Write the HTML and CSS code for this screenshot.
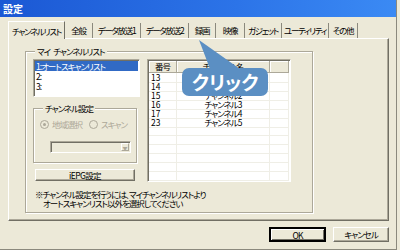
FILE: index.html
```html
<!DOCTYPE html>
<html lang="ja">
<head>
    <meta charset="UTF-8">
    <title>設定</title>
    <link rel="stylesheet" href="styles.css">
</head>
<body>
    <div class="window">
        <!-- タイトルバー -->
        <div class="titlebar">設定</div>

        <div class="dialog">
            <!-- タブ -->
            <div class="tabs">
                <div class="tab active t-list">チャンネルリスト</div>
                <div class="tab t-general">全般</div>
                <div class="tab t-data1">データ放送1</div>
                <div class="tab t-data2">データ放送2</div>
                <div class="tab t-rec">録画</div>
                <div class="tab t-video">映像</div>
                <div class="tab t-gadget">ガジェット</div>
                <div class="tab t-util">ユーティリティ</div>
                <div class="tab t-other">その他</div>
            </div>

            <!-- タブページ -->
            <div class="panel">
                <fieldset class="group mylist">
                    <legend>マイ&ensp;チャンネルリスト</legend>
                    <div class="mylist-body">
                        <div class="left-col">
                            <ul class="listbox">
                                <li class="selected">1:オートスキャンリスト</li>
                                <li>2:</li>
                                <li>3:</li>
                            </ul>

                            <fieldset class="group chset">
                                <legend>チャンネル設定</legend>
                                <div class="radios">
                                    <span class="radio checked"></span><span class="radio-label">地域選択</span>
                                    <span class="radio"></span><span class="radio-label">スキャン</span>
                                </div>
                                <div class="combo">
                                    <div class="combo-text"></div>
                                    <div class="combo-btn">▼</div>
                                </div>
                            </fieldset>

                            <div class="btn iepg">iEPG設定</div>
                        </div>

                        <!-- チャンネル一覧 -->
                        <div class="listview">
                            <div class="lv-row lv-header">
                                <div>番号</div>
                                <div>チャンネル名</div>
                                <div></div>
                            </div>
                            <div class="lv-row"><div>13</div><div>チャンネル0</div><div></div></div>
                            <div class="lv-row"><div>14</div><div>チャンネル1</div><div></div></div>
                            <div class="lv-row"><div>15</div><div>チャンネル2</div><div></div></div>
                            <div class="lv-row"><div>16</div><div>チャンネル3</div><div></div></div>
                            <div class="lv-row"><div>17</div><div>チャンネル4</div><div></div></div>
                            <div class="lv-row"><div>23</div><div>チャンネル5</div><div></div></div>
                            <div class="lv-row"><div></div><div></div><div></div></div>
                            <div class="lv-row"><div></div><div></div><div></div></div>
                            <div class="lv-row"><div></div><div></div><div></div></div>
                            <div class="lv-row"><div></div><div></div><div></div></div>
                            <div class="lv-row"><div></div><div></div><div></div></div>
                            <div class="lv-row"><div></div><div></div><div></div></div>
                        </div>

                        <p class="note">
                            <span>※チャンネル設定を行うには、マイチャンネルリストより</span>
                            <span class="indent">オートスキャンリスト以外を選択してください</span>
                        </p>
                    </div>
                </fieldset>
            </div>

            <!-- ボタン -->
            <div class="footer">
                <div class="btn default">OK</div>
                <div class="btn">キャンセル</div>
            </div>
        </div>

        <!-- 吹き出し -->
        <div class="callout">クリック</div>
    </div>
</body>
</html>
```

FILE: styles.css
```css
/* 全体 */
* {
    margin: 0;
    padding: 0;
    box-sizing: border-box;
}

body {
    width: 400px;
    height: 250px;
    overflow: hidden;
    background: #ece9d8;
    font-family: "Noto Sans CJK JP", sans-serif;
    font-size: 8.5px;
    line-height: 10px;
    letter-spacing: -1px;
    color: #000;
    font-feature-settings: "palt";
}

.window {
    position: relative;
    width: 397px;
    height: 250px;
    border-right: 1px solid #8b897d;
    border-bottom: 1px solid #8b897d;
    display: flex;
    flex-direction: column;
}

/* タイトルバー */
.titlebar {
    height: 17px;
    padding-left: 3px;
    background: linear-gradient(to right, #1b58d4, #2c74e8 60%, #3b8af4);
    color: #fff;
    font-weight: bold;
    font-size: 10px;
    line-height: 17px;
    letter-spacing: 0;
}

.dialog {
    flex: 1;
    display: flex;
    flex-direction: column;
    padding: 4px 7px 0 8px;
}

/* タブ */
.tabs {
    display: flex;
    align-items: flex-end;
    height: 17px;
}

.tab {
    height: 15px;
    line-height: 14px;
    text-align: center;
    letter-spacing: -1.3px;
    border-right: 1px solid #8b897d;
    white-space: nowrap;
}

.tab.active {
    position: relative;
    z-index: 1;
    height: 18px;
    margin-bottom: -1px;
    padding-top: 2px;
    background: #ece9d8;
    border-top: 1px solid #fff;
    border-left: 1px solid #fff;
    border-right: 1px solid #716f64;
}

.t-list { width: 57px; }
.t-general { width: 28px; }
.t-data1 { width: 48px; }
.t-data2 { width: 48px; }
.t-rec { width: 27px; }
.t-video { width: 29px; }
.t-gadget { width: 37px; }
.t-util { width: 47px; }
.t-other { width: 29px; }

/* タブページ */
.panel {
    height: 183px;
    padding: 7px 0 0 16px;
    border: 1px solid;
    border-color: #fff #716f64 #716f64 #fff;
    box-shadow: inset -1px -1px #aca899;
}

/* グループボックス */
.group {
    border: 1px solid #aca899;
    box-shadow: 1px 1px #fff, inset 1px 1px #fff;
    min-width: 0;
}

.group legend {
    margin-left: 2px;
    padding: 0 2px;
    background: #ece9d8;
    line-height: 10px;
}

.mylist {
    width: 288px;
    padding: 3px 21px 4px 7px;
}

.mylist-body {
    display: grid;
    grid-template-columns: 107px 144px;
    column-gap: 7px;
}

.left-col {
    display: flex;
    flex-direction: column;
}

/* リストボックス */
.listbox {
    height: 38px;
    padding: 1px;
    list-style: none;
    background: #fff;
    border: 1px solid;
    border-color: #aca899 #fff #fff #aca899;
    box-shadow: inset 1px 1px #716f64;
}

.listbox li {
    padding-left: 1px;
    line-height: 10px;
    white-space: nowrap;
}

.listbox li.selected {
    background: #316ac5;
    color: #fff;
}

/* チャンネル設定 */
.chset {
    width: 104px;
    margin-top: 6px;
    padding: 6px 0 9px 6px;
}

.chset legend {
    margin-left: 3px;
}

.radios {
    display: flex;
    align-items: center;
    height: 10px;
    color: #aca899;
    white-space: nowrap;
}

.radio {
    flex: none;
    width: 9px;
    height: 9px;
    margin-right: 3px;
    border-radius: 50%;
    border: 1px solid #aca899;
    background: #ece9d8;
    display: flex;
    align-items: center;
    justify-content: center;
}

.radio.checked::after {
    content: "";
    width: 3px;
    height: 3px;
    border-radius: 50%;
    background: #aca899;
}

.radio-label {
    margin-right: 7px;
}

.combo {
    display: flex;
    width: 81px;
    height: 12px;
    margin: 12px 0 0 10px;
    border: 1px solid;
    border-color: #aca899 #fff #fff #aca899;
    box-shadow: inset 1px 1px #716f64;
    padding: 1px 1px 1px 2px;
}

.combo-text {
    flex: 1;
}

.combo-btn {
    width: 8px;
    font-size: 5px;
    line-height: 8px;
    letter-spacing: 0;
    text-align: center;
    color: #aca899;
    border: 1px solid;
    border-color: #fff #aca899 #aca899 #fff;
}

/* ボタン */
.btn {
    height: 15px;
    text-align: center;
    line-height: 12px;
    background: #ece9d8;
    border: 1px solid;
    border-color: #fff #716f64 #716f64 #fff;
    box-shadow: inset -1px -1px #aca899;
}

.iepg {
    width: 100px;
    height: 12px;
    margin: 6px 0 0 2px;
    line-height: 10px;
    letter-spacing: -0.6px;
}

.note {
    grid-column: 1 / 3;
    margin-top: 8px;
    padding-left: 2px;
    line-height: 9px;
}

.note span {
    display: block;
    white-space: nowrap;
}

.note .indent {
    padding-left: 8px;
}

/* リストビュー */
.listview {
    overflow: hidden;
    background: #fff;
    border: 1px solid;
    border-color: #aca899 #fff #fff #aca899;
    box-shadow: inset 1px 1px #716f64;
    padding: 1px 1px 0 1px;
}

.lv-row {
    display: grid;
    grid-template-columns: 28px 93px 1fr;
    height: 9px;
    line-height: 9px;
}

.lv-row > div {
    border-right: 1px solid #efeee6;
    border-bottom: 1px solid #efeee6;
    white-space: nowrap;
}

.lv-row > div:first-child {
    padding-left: 2px;
    letter-spacing: 0;
}

.lv-row > div:nth-child(2) {
    text-align: center;
}

.lv-header {
    height: 12px;
    line-height: 10px;
}

.lv-header > div {
    background: #ece9d8;
    border-right: 1px solid #aca899;
    border-bottom: 1px solid #aca899;
    box-shadow: inset 1px 1px #fff;
}

.lv-header > div:first-child {
    padding-left: 0;
    text-align: center;
    letter-spacing: -1px;
}

/* 下部ボタン */
.footer {
    display: flex;
    justify-content: flex-end;
    gap: 7px;
    margin-top: 6px;
}

.footer .btn {
    width: 56px;
}

.footer .default {
    width: 57px;
    border-width: 2px;
    border-color: #000;
    box-shadow: inset 1px 1px #fff, inset -1px -1px #716f64;
}

/* 吹き出し */
.callout {
    position: absolute;
    left: 182px;
    top: 68px;
    width: 86px;
    height: 28px;
    border-radius: 7px;
    background: #5b8fc3;
    color: #fff;
    font-size: 19px;
    font-weight: bold;
    line-height: 28px;
    text-align: center;
    letter-spacing: 0;
}

.callout::before {
    content: "";
    position: absolute;
    left: 17px;
    top: -28px;
    width: 41px;
    height: 29px;
    background: #5b8fc3;
    clip-path: polygon(0 0, 27% 100%, 100% 100%);
}
```
